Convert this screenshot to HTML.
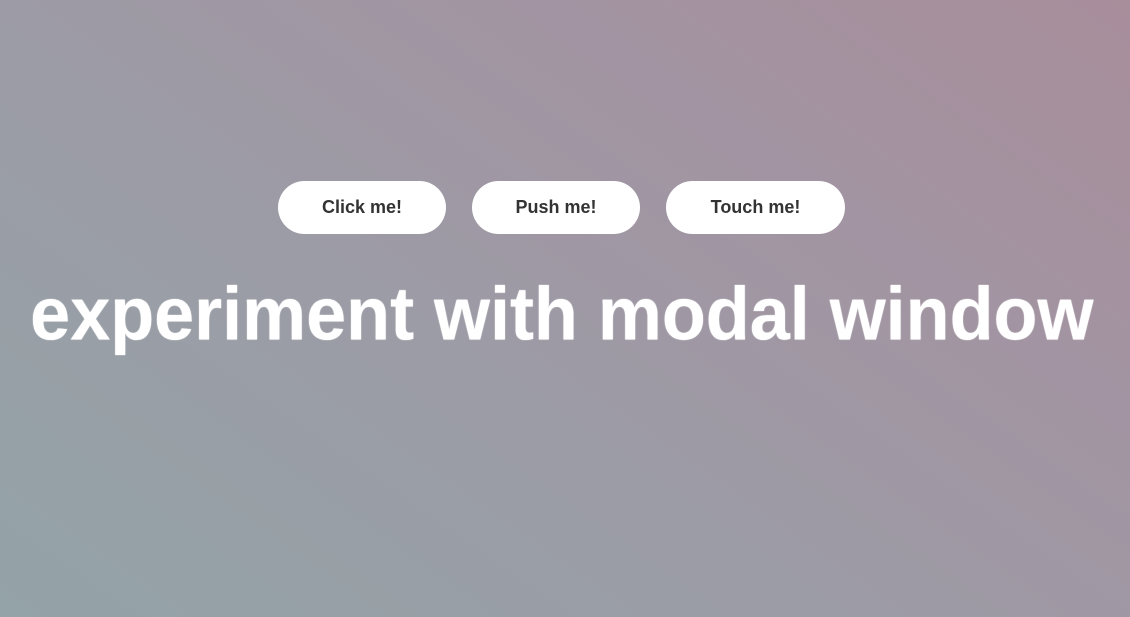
<!DOCTYPE html>
<html><head><meta charset="utf-8"><style>
html,body{margin:0;padding:0;width:1130px;height:617px;overflow:hidden}
body{background:linear-gradient(35deg,#93a3a7 0%,#9c9ca6 40%,#a393a1 75%,#a88e9b 100%);font-family:"Liberation Sans",sans-serif;position:relative}
.btn{position:absolute;top:181px;height:53px;border-radius:27px;background:#fff;color:#333;font-weight:bold;font-size:18px;line-height:53px;text-align:center}
h1{position:absolute;left:0;width:1130px;top:275px;margin:0;text-align:center;color:#fff;font-size:68px;line-height:80px;font-weight:bold;transform:scale(1.058,1.1);transform-origin:50% 60%}
</style></head><body>
<div class="btn" style="left:278px;width:168px">Click me!</div>
<div class="btn" style="left:472px;width:168px">Push me!</div>
<div class="btn" style="left:666px;width:179px">Touch me!</div>
<h1><span style="position:relative;left:-3px;text-shadow:0 0 1px #fff">experiment with modal window</span></h1>
</body></html>
